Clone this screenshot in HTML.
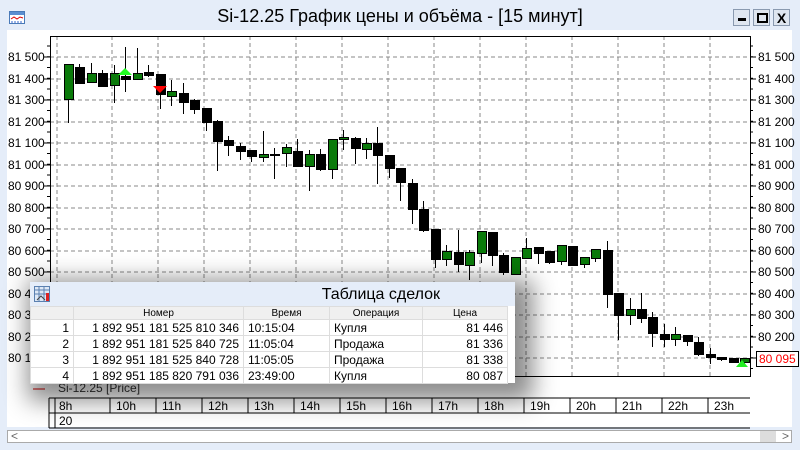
<!DOCTYPE html>
<html><head><meta charset="utf-8"><style>
body{margin:0;width:800px;height:450px;background:#e5edf9;font-family:"Liberation Sans",sans-serif;position:relative;overflow:hidden}
.t{position:absolute;top:6px;left:0;width:800px;text-align:center;font-size:18px;color:#000}
.btn{position:absolute;top:9px;width:17px;height:17px;border:1px solid #8a9ab0;background:#dfe6f0;box-sizing:border-box}
.ax{position:absolute;font-size:12px;color:#000}
#pop{position:absolute;left:30px;top:282px;width:485px;height:101px;background:#fff;box-shadow:8px 8px 22px 10px rgba(0,0,0,.45)}
#pop .h{height:24px;background:#e5edf9;font-size:16px;line-height:26px;text-align:right;padding-right:75px}
table{border-collapse:collapse;font-size:12px;width:477px;table-layout:fixed}
td{height:15px;padding:0 4px;border:1px solid #ddd;white-space:nowrap;overflow:hidden}
tr.hd td{background:#f0f0f0;font-size:10px;text-align:center;height:12px}
</style></head><body>
<div class="t">Si-12.25 График цены и объёма - [15 минут]</div>
<svg style="position:absolute;left:9px;top:11px" width="16" height="13"><rect x=".5" y=".5" width="15" height="12" fill="#fff" stroke="#4a7ab8"/><rect x="1" y="1" width="14" height="3" fill="#5b8ed0"/><path d="M2 8l3-2 3 2 3-2 3 1" stroke="#d00" fill="none"/><path d="M3 12v-2M6 12v-2M9 12v-2M12 12v-2" stroke="#36c"/></svg>
<div class="btn" style="left:733px"><div style="position:absolute;left:4px;top:8px;width:8px;height:3px;background:#000"></div></div>
<div class="btn" style="left:753px"><div style="position:absolute;left:3px;top:3px;width:7px;height:6px;border:2px solid #000"></div></div>
<div class="btn" style="left:773px;font-weight:bold;font-size:14px;text-align:center;line-height:16px">X</div>
<div style="position:absolute;left:7px;top:30px;width:785px;height:397px;background:#fff"></div>
<svg id="ch" style="position:absolute;left:0;top:0" width="800" height="450"></svg>
<div class="ax" style="left:8px;top:50px">81 500</div><div class="ax" style="left:8px;top:72px">81 400</div><div class="ax" style="left:8px;top:93px">81 300</div><div class="ax" style="left:8px;top:115px">81 200</div><div class="ax" style="left:8px;top:136px">81 100</div><div class="ax" style="left:8px;top:158px">81 000</div><div class="ax" style="left:8px;top:179px">80 900</div><div class="ax" style="left:8px;top:201px">80 800</div><div class="ax" style="left:8px;top:222px">80 700</div><div class="ax" style="left:8px;top:244px">80 600</div><div class="ax" style="left:8px;top:265px">80 500</div><div class="ax" style="left:8px;top:287px">80 400</div><div class="ax" style="left:8px;top:308px">80 300</div><div class="ax" style="left:8px;top:330px">80 200</div><div class="ax" style="left:8px;top:351px">80 100</div>
<div class="ax" style="left:758px;top:50px">81 500</div><div class="ax" style="left:758px;top:72px">81 400</div><div class="ax" style="left:758px;top:93px">81 300</div><div class="ax" style="left:758px;top:115px">81 200</div><div class="ax" style="left:758px;top:136px">81 100</div><div class="ax" style="left:758px;top:158px">81 000</div><div class="ax" style="left:758px;top:179px">80 900</div><div class="ax" style="left:758px;top:201px">80 800</div><div class="ax" style="left:758px;top:222px">80 700</div><div class="ax" style="left:758px;top:244px">80 600</div><div class="ax" style="left:758px;top:265px">80 500</div><div class="ax" style="left:758px;top:287px">80 400</div><div class="ax" style="left:758px;top:308px">80 300</div><div class="ax" style="left:758px;top:330px">80 200</div>
<div class="ax" style="left:756px;top:351px;color:#f00;border:1px solid #000;background:#fff;padding:0 2px;line-height:14px">80 095</div>
<div class="ax" style="left:58px;top:381px;color:#333">Si-12.25 [Price]</div>
<div class="ax" style="left:59px;top:399px">8h</div><div class="ax" style="left:116px;top:399px">10h</div><div class="ax" style="left:162px;top:399px">11h</div><div class="ax" style="left:208px;top:399px">12h</div><div class="ax" style="left:254px;top:399px">13h</div><div class="ax" style="left:300px;top:399px">14h</div><div class="ax" style="left:346px;top:399px">15h</div><div class="ax" style="left:392px;top:399px">16h</div><div class="ax" style="left:438px;top:399px">17h</div><div class="ax" style="left:484px;top:399px">18h</div><div class="ax" style="left:530px;top:399px">19h</div><div class="ax" style="left:576px;top:399px">20h</div><div class="ax" style="left:622px;top:399px">21h</div><div class="ax" style="left:668px;top:399px">22h</div><div class="ax" style="left:714px;top:399px">23h</div>
<div class="ax" style="left:59px;top:414px">20</div>
<div style="position:absolute;left:7px;top:430px;width:785px;height:13px;background:#fff;border:1px solid #aaa;box-sizing:border-box"></div>
<div class="ax" style="left:11px;top:429px;color:#666">&lt;</div>
<div style="position:absolute;left:760px;top:431px;width:16px;height:11px;background:#ddd"></div>
<div class="ax" style="left:782px;top:429px;color:#666">&gt;</div>
<div id="pop"><div class="h">Таблица сделок</div>
<svg style="position:absolute;left:4px;top:4px" width="16" height="16"><rect x=".5" y=".5" width="15" height="15" fill="#dde8f6" stroke="#5a80b0"/><path d="M1 4h14M1 8h14M5 1v14M10 1v14" stroke="#5a80b0"/><rect x="12" y="7" width="3" height="8" fill="#d22"/><path d="M3 14l4-4 4 4" stroke="#444" fill="none"/></svg>
<table><colgroup><col style="width:43px"><col style="width:170px"><col style="width:86px"><col style="width:93px"><col style="width:85px"></colgroup><tr class="hd"><td></td><td>Номер</td><td>Время</td><td>Операция</td><td>Цена</td></tr>
<tr><td style="text-align:right">1</td><td style="text-align:right">1 892 951 181 525 810 346</td><td>10:15:04</td><td>Купля</td><td style="text-align:right">81 446</td></tr>
<tr><td style="text-align:right">2</td><td style="text-align:right">1 892 951 181 525 840 725</td><td>11:05:04</td><td>Продажа</td><td style="text-align:right">81 336</td></tr>
<tr><td style="text-align:right">3</td><td style="text-align:right">1 892 951 181 525 840 728</td><td>11:05:05</td><td>Продажа</td><td style="text-align:right">81 338</td></tr>
<tr><td style="text-align:right">4</td><td style="text-align:right">1 892 951 185 820 791 036</td><td>23:49:00</td><td>Купля</td><td style="text-align:right">80 087</td></tr></table></div>
<script>
var s='';
var ys=[57,79,100,122,143,165,186,208,229,251,272,294,315,337,358];
ys.forEach(function(y){s+='<path d="M50 '+y+'H750" stroke="#888" stroke-dasharray="4 3"/>';s+='<path d="M44 '+y+'h6M750 '+y+'h6" stroke="#000"/>';});
for(var y=46;y<376;y+=10.75){s+='<path d="M47 '+y+'h3M750 '+y+'h3" stroke="#000"/>';}
var xs=[57,112,158,204,250,296,342,388,434,480,526,572,618,664,710];
xs.forEach(function(x){s+='<path d="M'+x+' 36V376" stroke="#888" stroke-dasharray="4 3"/>';s+='<path d="M'+(x-2)+' 398V413" stroke="#000"/>';});
s+='<rect x="50.5" y="36.5" width="700" height="340" fill="none" stroke="#000"/>';
s+='<path d="M49 398H750M49 413H750M49 428H750M49 398V428M55 398V428" stroke="#000"/>';
s+='<path d="M33 389h12" stroke="#c00"/>';
var c=[[64,99,64,123,1],[67,83,64,84,0],[73,82,63,82,1],[73,86,70,87,0],[73,85,65,103,1],[76,79,47,92,0],[73,79,48,80,1],[72,75,65,77,0],[74,94,74,109,0],[91,96,80,106,1],[93,102,83,114,0],[100,109,99,114,0],[108,122,108,131,0],[121,141,120,171,0],[140,145,136,156,0],[146,151,143,160,0],[150,156,150,162,0],[154,157,131,162,1],[154,155,148,179,0],[147,153,144,167,1],[151,166,139,167,0],[154,166,150,191,1],[154,169,149,171,0],[139,169,139,179,1],[137,139,130,150,1],[138,148,137,164,0],[143,149,138,159,1],[143,155,127,184,0],[155,168,155,178,0],[168,182,168,201,0],[183,209,179,224,0],[209,230,201,232,0],[229,259,229,268,0],[251,259,245,266,1],[252,264,230,272,0],[252,265,250,280,1],[231,253,231,263,1],[232,255,232,266,0],[255,272,253,275,0],[257,274,257,275,1],[248,258,238,259,1],[247,253,247,264,0],[251,262,251,264,0],[245,261,245,265,1],[246,265,246,265,0],[257,264,257,268,1],[249,258,249,262,1],[250,294,241,308,0],[293,315,293,340,0],[309,315,298,325,1],[309,318,293,323,0],[317,333,312,347,0],[334,339,324,347,0],[334,339,327,346,1],[335,341,335,346,0],[342,354,337,356,0],[354,357,348,364,0],[357,359,357,361,0],[358,362,358,363,0],[358,362,358,364,1]];
c.forEach(function(d,i){var x=Math.round(68+i*11.46);s+='<path d="M'+(x+.5)+' '+d[2]+'V'+d[3]+'" stroke="#000"/>';s+='<rect x="'+(x-4)+'.5" y="'+d[0]+'.5" width="9" height="'+Math.max(d[1]-d[0],1)+'" fill="'+(d[4]?'#0a7a0a':'#000')+'" stroke="#000"/>';});
s+='<path d="M118 75l7-7 7 7z" fill="#2f2"/><path d="M153 86h14l-7 7z" fill="#f00"/><path d="M736 367l6-7 6 7z" fill="#2e2"/>';
document.getElementById('ch').innerHTML=s;
</script>
</body></html>
